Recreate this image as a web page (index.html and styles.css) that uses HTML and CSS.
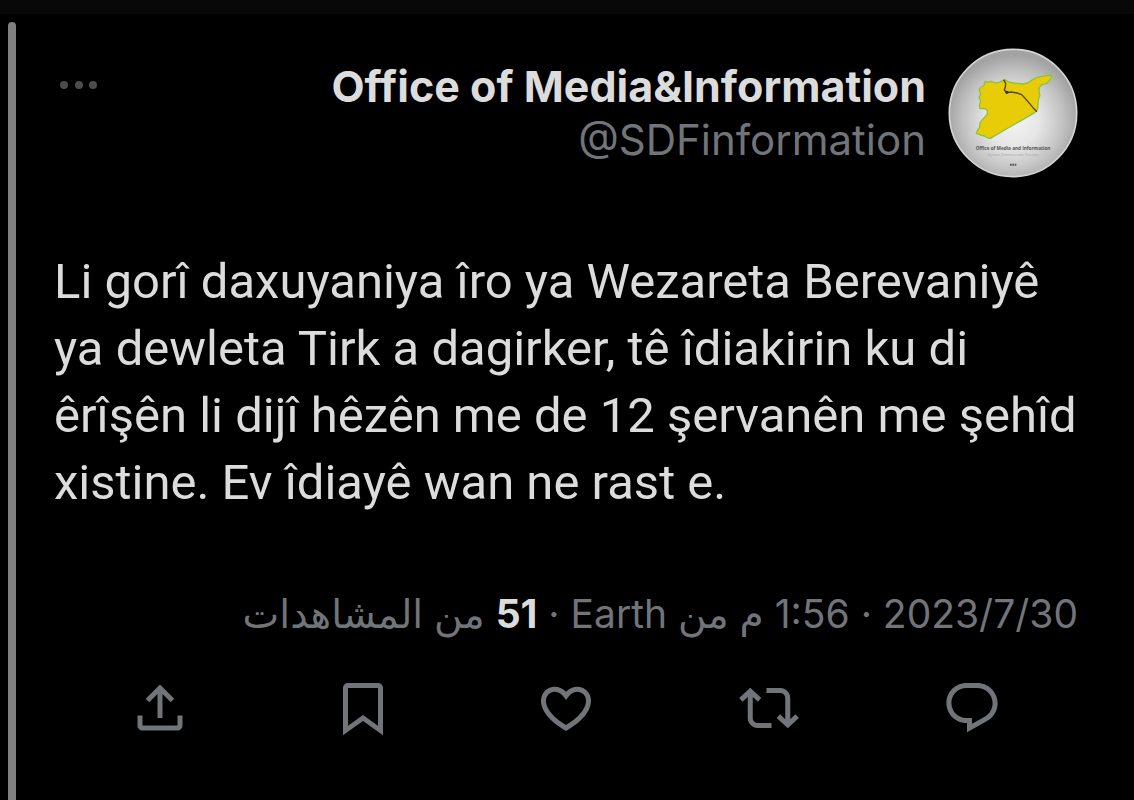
FILE: index.html
```
<!DOCTYPE html>
<html lang="ku">
<head>
  <meta charset="UTF-8">
  <meta name="viewport" content="width=device-width, initial-scale=1.0">
  <title>Office of Media&amp;Information</title>
  <link rel="stylesheet" href="styles.css">
</head>
<body>

<div class="top-strip"></div>

<main class="page">
  <div class="thread-line"></div>

  <article class="post" dir="rtl">
    <!-- Author -->
    <header class="post-header">
      <svg class="avatar" viewBox="56 54 390 390" role="img" aria-label="Office of Media and Information">
        <defs>
          <radialGradient id="disc" cx="0.5" cy="0.56" r="0.52">
            <stop offset="0" stop-color="#f4f4f4"/>
            <stop offset="0.4" stop-color="#e6e6e6"/>
            <stop offset="0.75" stop-color="#c2c2c2"/>
            <stop offset="1" stop-color="#a2a2a2"/>
          </radialGradient>
        </defs>
        <circle cx="251" cy="249" r="191" fill="url(#disc)" stroke="#d6d6d6" stroke-width="5"/>
        <path d="M168 154l10 3 8-3 12 5 12-2 10-5 8-2 10 6 14 3 14 1 15 2 14-3 12-8 14-8 14-3 16-3 12-1 4 4-5 10-11 11-14 3-7 8-1 14 3 10-5 12-1 18-1 12-9 10-45 26-50 29-38 22-8-1-10-6-12-3-12-5 4-10 6-8 1-14 8-10 8-8 7-10-2-10-9-5-12 1-2-10 4-14-5-10 5-9-4-14 5-8 8-3z" fill="#e8cc08" stroke="#8ac43f" stroke-width="4" stroke-linejoin="round"/>
        <path d="M223 149l6 12-1 10-3 9 8 8 12-2 18 3 14 5 12 13 12 14 10 12 12 12" fill="none" stroke="#54451c" stroke-width="4" stroke-linejoin="round"/>
        <circle cx="233" cy="187" r="5" fill="#3c321c"/>
        <text class="avatar-title" x="251" y="361">Office of Media and Information</text>
        <text class="avatar-sub" x="251" y="378">Syrian Democratic Forces</text>
        <path d="M242 404h5m2 0h5m2 0h5" stroke="#555" stroke-width="6"/>
      </svg>
      <div class="author" dir="ltr">
        <h1 class="author-name">Office of Media&amp;Information</h1>
        <a class="author-handle" href="#">@SDFinformation</a>
      </div>
      <button class="more" type="button" aria-label="More">
        <svg width="38" height="10" viewBox="0 0 38 10" fill="currentColor">
          <circle cx="4" cy="5" r="4"/>
          <circle cx="19" cy="5" r="4"/>
          <circle cx="33" cy="5" r="4"/>
        </svg>
      </button>
    </header>

    <!-- Post text -->
    <p class="post-text" dir="ltr">Li gorî daxuyaniya îro ya Wezareta Berevaniyê<br>
      ya dewleta Tirk a dagirker, tê îdiakirin ku di<br>
      êrîşên li dijî hêzên me de 12 şervanên me şehîd<br>
      xistine. Ev îdiayê wan ne rast e.</p>

    <!-- Date and views -->
    <div class="post-meta" lang="ar">
      <bdi>2023/7/30</bdi> · <bdi>1:56</bdi> م من <bdi>Earth</bdi> · <strong>51</strong> من المشاهدات
    </div>

    <!-- Actions -->
    <div class="post-actions">
      <button type="button" aria-label="Reply">
        <svg viewBox="0 0 24 24"><path d="M1.751 10c0-4.42 3.584-8 8.005-8h4.366c4.49 0 8.129 3.64 8.129 8.13 0 2.96-1.607 5.68-4.196 7.11l-8.054 4.46v-3.69h-.067c-4.49.1-8.183-3.51-8.183-8.01zm8.005-6c-3.317 0-6.005 2.69-6.005 6 0 3.37 2.77 6.08 6.138 6.01l.351-.01h1.761v2.3l5.087-2.81c1.951-1.08 3.163-3.13 3.163-5.36 0-3.39-2.744-6.13-6.129-6.13H9.756z"/></svg>
      </button>
      <button type="button" aria-label="Repost">
        <svg viewBox="0 0 24 24"><path d="M4.5 3.88l4.432 4.14-1.364 1.46L5.5 7.55V16c0 1.1.896 2 2 2H13v2H7.5c-2.209 0-4-1.79-4-4V7.55L1.432 9.48.068 8.02 4.5 3.88zM16.5 6H11V4h5.5c2.209 0 4 1.79 4 4v8.45l2.068-1.93 1.364 1.46-4.432 4.14-4.432-4.14 1.364-1.46 2.068 1.93V8c0-1.1-.896-2-2-2z"/></svg>
      </button>
      <button type="button" aria-label="Like">
        <svg viewBox="0 0 24 24"><path d="M16.697 5.5c-1.222-.06-2.679.51-3.89 2.16l-.805 1.09-.806-1.09C9.984 6.01 8.526 5.44 7.304 5.5c-1.243.07-2.349.78-2.91 1.91-.552 1.12-.633 2.78.479 4.82 1.074 1.97 3.257 4.27 7.129 6.61 3.87-2.34 6.052-4.64 7.126-6.61 1.111-2.04 1.03-3.7.477-4.82-.561-1.13-1.666-1.84-2.908-1.91zm4.187 7.69c-1.351 2.48-4.001 5.12-8.379 7.67l-.503.3-.504-.3c-4.379-2.55-7.029-5.19-8.382-7.67-1.36-2.5-1.41-4.86-.514-6.67.887-1.79 2.647-2.91 4.601-3.01 1.651-.09 3.368.56 4.798 2.01 1.429-1.45 3.146-2.1 4.796-2.01 1.954.1 3.714 1.22 4.601 3.01.896 1.81.846 4.17-.514 6.67z"/></svg>
      </button>
      <button type="button" aria-label="Bookmark">
        <svg viewBox="0 0 24 24"><path d="M4 4c0-1.100.9-2 2-2h12c1.100 0 2 .9 2 2v18.940l-8-5.710-8 5.710V4zM6 4v15.060l6-4.290 6 4.290V4H6z"/></svg>
      </button>
      <button type="button" aria-label="Share">
        <svg viewBox="0 0 24 24"><path d="M12 2.590l5.700 5.700-1.410 1.420L13 6.410V16h-2V6.410l-3.300 3.300-1.410-1.420L12 2.590zM21 15v4c0 1.100-.9 2-2 2H5c-1.100 0-2-.9-2-2v-4h2v4h14v-4h2z"/></svg>
      </button>
    </div>
  </article>
</main>

</body>
</html>
```
FILE: styles.css
```
/* General Styles */
* {
  box-sizing: border-box;
}

body {
  margin: 0;
  min-height: 100vh;
  display: flex;
  flex-direction: column;
  background-color: #000;
  color: #dcdcdc;
  font-family: Inter, "DejaVu Sans", sans-serif;
}

button {
  padding: 0;
  border: none;
  background: none;
  color: inherit;
  cursor: pointer;
}

svg {
  display: block;
}

.top-strip {
  height: 14px;
  background-color: #080808;
}

.page {
  flex: 1;
  display: flex;
  padding: 8px 0 0 8px;
}

.thread-line {
  width: 8px;
  flex-shrink: 0;
  border-radius: 4px 4px 0 0;
  background-color: #808080;
}

.post {
  flex: 1;
  min-width: 0;
  padding: 26px 56px 40px 38px;
}

/* Header */
.post-header {
  display: flex;
  align-items: flex-start;
  gap: 22px;
}

.avatar {
  width: 130px;
  height: 130px;
  flex-shrink: 0;
}

.avatar-title,
.avatar-sub {
  font-family: "Open Sans", sans-serif;
  text-anchor: middle;
  direction: ltr;
}

.avatar-title {
  font-size: 14px;
  font-weight: 700;
  fill: #555;
}

.avatar-sub {
  font-size: 13px;
  fill: #a4a4a4;
}

.author {
  flex: 1;
  padding-top: 11px;
  text-align: right;
}

.author-name {
  margin: 0;
  font-size: 43px;
  line-height: 54px;
  font-weight: 700;
}

.author-handle {
  display: block;
  font-size: 42px;
  line-height: 54px;
  color: #717579;
  text-decoration: none;
}

.more {
  padding: 32px 6px;
  color: #4c4c4f;
}

/* Post text */
.post-text {
  margin: 70px 0 0;
  font-family: Roboto, sans-serif;
  font-size: 49px;
  line-height: 67px;
  white-space: nowrap;
}

.post-meta {
  margin-top: 70px;
  font-size: 39px;
  line-height: 56px;
  color: #717579;
}

.post-meta strong {
  color: #dcdcdc;
}

/* Actions */
.post-actions {
  display: grid;
  grid-template-columns: repeat(5, 1fr);
  justify-items: center;
  padding: 0 5px;
  margin-top: 36px;
  color: #717579;
}

.post-actions svg {
  width: 60px;
  height: 60px;
  fill: currentColor;
}

/* Responsive Design */
@media (max-width: 1000px) {
  .post-text {
    white-space: normal;
  }

  .post-text br {
    display: none;
  }
}
```
